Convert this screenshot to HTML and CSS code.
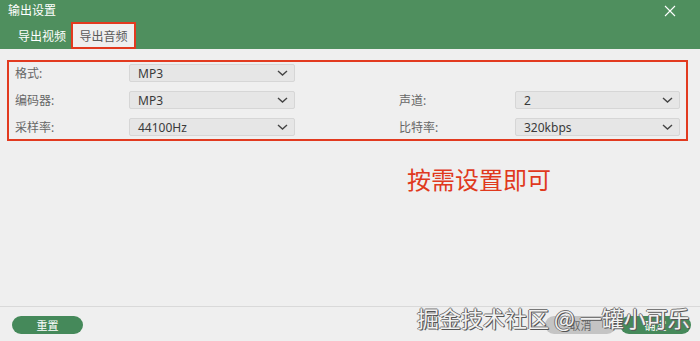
FILE: index.html
```html
<!DOCTYPE html>
<html>
  <head>
    <meta charset="utf-8">
    <title>输出设置</title>
    <link rel="stylesheet" href="styles.css">
  </head>
  <body>
    <div class="dialog">
      <!-- 标题栏 -->
      <div class="header">
        <div class="title-row">
          <span class="title">输出设置</span>
          <svg class="close" width="12" height="12" viewBox="0 0 12 12">
            <path d="M1 1L11 11M11 1L1 11" stroke="#ffffff" stroke-width="1.1" fill="none"/>
          </svg>
        </div>
        <div class="tabs">
          <span class="tab">导出视频</span>
          <span class="tab active">导出音频</span>
        </div>
      </div>

      <!-- 参数设置 -->
      <div class="form">
        <span class="label col-a">格式:</span>
        <div class="select col-b"><span>MP3</span><svg class="chev" width="11" height="6" viewBox="0 0 11 6"><path d="M1 1L5.5 5L10 1" stroke="#444" stroke-width="1.4" fill="none"/></svg></div>

        <span class="label col-a">编码器:</span>
        <div class="select col-b"><span>MP3</span><svg class="chev" width="11" height="6" viewBox="0 0 11 6"><path d="M1 1L5.5 5L10 1" stroke="#444" stroke-width="1.4" fill="none"/></svg></div>
        <span class="label col-c">声道:</span>
        <div class="select col-d"><span>2</span><svg class="chev" width="11" height="6" viewBox="0 0 11 6"><path d="M1 1L5.5 5L10 1" stroke="#444" stroke-width="1.4" fill="none"/></svg></div>

        <span class="label col-a">采样率:</span>
        <div class="select col-b"><span>44100Hz</span><svg class="chev" width="11" height="6" viewBox="0 0 11 6"><path d="M1 1L5.5 5L10 1" stroke="#444" stroke-width="1.4" fill="none"/></svg></div>
        <span class="label col-c">比特率:</span>
        <div class="select col-d"><span>320kbps</span><svg class="chev" width="11" height="6" viewBox="0 0 11 6"><path d="M1 1L5.5 5L10 1" stroke="#444" stroke-width="1.4" fill="none"/></svg></div>
      </div>

      <div class="note">按需设置即可</div>

      <div class="spacer"></div>

      <!-- 底部按钮 -->
      <div class="footer">
        <button class="btn green">重置</button>
        <div class="right-btns">
          <button class="btn grey">取消</button>
          <button class="btn green">确定</button>
        </div>
      </div>
    </div>
    <div class="watermark">掘金技术社区 @ 一罐小可乐</div>
  </body>
</html>
```

FILE: styles.css
```css
body {
  margin: 0;
  background: #efefef;
  font-family: "Noto Sans", "Noto Sans CJK SC", sans-serif;
  font-size: 12px;
  position: relative;
}
.dialog {
  width: 700px;
  height: 341px;
  display: flex;
  flex-direction: column;
}
/* 标题栏 */
.header {
  background: #4f8f5e;
  color: #ffffff;
  height: 49px;
  box-sizing: border-box;
}
.title-row {
  height: 22px;
  display: flex;
  align-items: center;
  justify-content: space-between;
  padding: 0 24px 0 8px;
}
.title {
  font-size: 12px;
  line-height: 14px;
}
.tabs {
  display: flex;
  align-items: flex-end;
  height: 27px;
  padding-left: 18px;
  gap: 5px;
}
.tab {
  height: 27px;
  line-height: 30px;
  color: #ffffff;
  box-sizing: border-box;
}
.tab.active {
  background: #efefef;
  color: #5a5a5a;
  width: 65px;
  text-align: center;
  border: 2.5px solid #e23a1f;
  line-height: 25px;
}
/* 参数表单 */
.form {
  margin: 11px 12px 0 7px;
  height: 81px;
  box-sizing: border-box;
  border: 2.5px solid #e23a1f;
  padding: 2px 0 0 6px;
  display: grid;
  grid-template-columns: 114px 166px 104px 116px 165px;
  grid-auto-rows: 18px;
  row-gap: 9px;
  align-items: center;
}
.col-a { grid-column: 1; }
.col-b { grid-column: 2; }
.col-c { grid-column: 4; }
.col-d { grid-column: 5; }
.label {
  color: #666666;
  font-size: 12px;
}
.select {
  height: 18px;
  box-sizing: border-box;
  background: #e6e6e6;
  border: 1px solid #d6d6d6;
  border-radius: 2px;
  display: flex;
  align-items: center;
  justify-content: space-between;
  padding: 0 6px 0 8px;
  color: #3a3a3a;
  font-size: 12px;
}
.chev {
  display: block;
}
.note {
  margin-top: 23px;
  padding-left: 407px;
  color: #e0391d;
  font-size: 24px;
  line-height: 30px;
  font-family: "Noto Sans CJK SC", sans-serif;
}
.spacer {
  flex: 1;
}
/* 底部 */
.footer {
  height: 35px;
  border-top: 1px solid #d9d9d9;
  box-sizing: border-box;
  display: flex;
  justify-content: space-between;
  padding: 9px 9px 0 12px;
}
.right-btns {
  display: flex;
  gap: 4px;
}
.btn {
  width: 71px;
  height: 18px;
  border: none;
  border-radius: 9px;
  font-size: 11px;
  font-family: "Noto Sans CJK SC", sans-serif;
  padding: 0;
  color: #ffffff;
}
.btn.green {
  background: #45895a;
}
.btn.grey {
  background: #c4c4c4;
  color: #666666;
}
.watermark {
  position: absolute;
  left: 417px;
  top: 301px;
  font-size: 22px;
  font-family: "Noto Sans CJK SC", sans-serif;
  color: #f2f2f2;
  text-shadow: 1px 1px 0 #555555, -1px 0 0 #777777, 0 -1px 0 #777777, 1px 0 0 #666666;
  white-space: nowrap;
}
```
